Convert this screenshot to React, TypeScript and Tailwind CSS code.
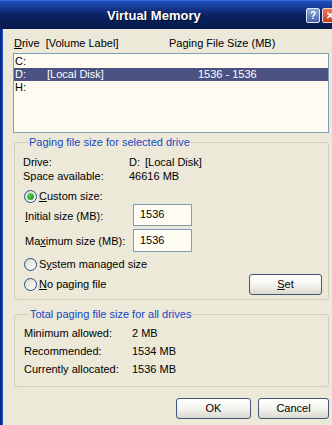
import React from "react";

const drives = [
  { letter: "C:", label: "", size: "" },
  { letter: "D:", label: "[Local Disk]", size: "1536 - 1536", selected: true },
  { letter: "H:", label: "", size: "" },
];

function Radio({ checked }: { checked?: boolean }) {
  return (
    <span className="w-[13px] h-[13px] rounded-full border border-[#1c5180] bg-gradient-to-br from-[#dcd9cd] to-[#ffffff] flex items-center justify-center shrink-0">
      {checked && (
        <span className="w-[7px] h-[7px] rounded-full bg-gradient-to-br from-[#5fd85a] to-[#1f951f]" />
      )}
    </span>
  );
}

function Field({ value, tall }: { value: string; tall?: boolean }) {
  return (
    <div
      className={`w-[59px] ${tall ? "h-[23px]" : "h-[22px]"} border border-[#7f9db9] bg-[#fffcf3] pl-[6px] flex items-center`}
    >
      {value}
    </div>
  );
}

function XpButton({ children, w }: { children: React.ReactNode; w: string }) {
  return (
    <button
      className={`${w} h-[21px] rounded-[3px] border border-[#43557a] bg-gradient-to-b from-[#ffffff] via-[#f4f4f0] to-[#dcd8cc] text-[11px] leading-[13px] flex items-center justify-center`}
    >
      {children}
    </button>
  );
}

export default function App() {
  return (
    <div className="w-[332px] h-[425px] overflow-hidden flex flex-col bg-[#ece9d8] text-[11px] leading-[13px] text-black font-['Liberation_Sans',Arial,sans-serif]">
      {/* Title bar */}
      <div className="h-[29px] shrink-0 flex items-center bg-gradient-to-b from-[#1f4fbf] via-[#0b2263] to-[#081a4c] border-t border-[#3566d6]">
        <span className="ml-[107px] text-white font-bold text-[13px] leading-[15px] [text-shadow:1px_1px_0_#030a24]">
          Virtual Memory
        </span>
        <div className="ml-auto flex items-center gap-[2px] -mr-[5px]">
          <span className="w-[14px] h-[15px] rounded-[2px] border border-[#dfe6f5] bg-gradient-to-b from-[#8fa8d8] to-[#4a64a8] text-white text-[10px] font-bold flex items-center justify-center">
            ?
          </span>
          <span className="w-[15px] h-[15px] rounded-[2px] border border-[#f3d7cc] bg-gradient-to-b from-[#e87a5c] to-[#c23b18] text-white text-[10px] font-bold flex items-center justify-center">
            ✕
          </span>
        </div>
      </div>

      <div className="flex flex-1">
        {/* Window left frame */}
        <div className="w-[4px] bg-[#0a2a86] border-r border-[#2454c4]" />

        <div className="flex-1 flex flex-col pl-[10px] pr-[3px] pt-[8px]">
          {/* List header */}
          <div className="flex pl-[1px]">
            <span className="w-[155px]">
              <span className="underline">D</span>rive
              <span className="ml-[6px]">[Volume Label]</span>
            </span>
            <span>Paging File Size (MB)</span>
          </div>

          {/* Drive list */}
          <div className="mt-[3px] h-[80px] border border-[#7f9db9] bg-[#fffbf0] pt-[1px]">
            {drives.map((d) => (
              <div
                key={d.letter}
                className={`h-[13px] flex items-center pl-[1px] ${d.selected ? "bg-[#4b5283] text-white" : ""}`}
              >
                <span className="w-[32px]">{d.letter}</span>
                <span className="w-[151px]">{d.label}</span>
                <span>{d.size}</span>
              </div>
            ))}
          </div>

          {/* Selected drive group */}
          <fieldset className="mt-[3px] ml-[1px] border border-[#d0d0bf] rounded-[3px] pl-[8px] pr-[6px] pb-[4px]">
            <legend className="ml-[5px] px-[1px] text-[#1747c2]">Paging file size for selected drive</legend>
            <div className="mt-[6px] h-[14px] flex items-center">
              <span className="w-[106px]">Drive:</span>
              <span>
                D:<span className="ml-[5px]">[Local Disk]</span>
              </span>
            </div>
            <div className="h-[14px] flex items-center">
              <span className="w-[106px]">Space available:</span>
              <span>46616 MB</span>
            </div>
            <div className="mt-[7px] h-[13px] flex items-center ml-[1px] gap-[2px]">
              <Radio checked />
              <span>
                <span className="underline">C</span>ustom size:
              </span>
            </div>
            <div className="h-[23px] flex items-center">
              <span className="w-[108px] ml-[2px] pt-[3px]">
                <span className="underline">I</span>nitial size (MB):
              </span>
              <Field value="1536" />
            </div>
            <div className="mt-[3px] h-[23px] flex items-center">
              <span className="w-[108px] ml-[2px] pt-[2px]">
                Ma<span className="underline">x</span>imum size (MB):
              </span>
              <Field value="1536" tall />
            </div>
            <div className="mt-[6px] h-[13px] flex items-center ml-[1px] gap-[2px]">
              <Radio />
              <span>
                S<span className="underline">y</span>stem managed size
              </span>
            </div>
            <div className="mt-[3px] h-[21px] flex items-center">
              <div className="flex items-center ml-[1px] gap-[2px]">
                <Radio />
                <span>
                  <span className="underline">N</span>o paging file
                </span>
              </div>
              <div className="ml-auto">
                <XpButton w="w-[73px]">
                  <span className="underline">S</span>et
                </XpButton>
              </div>
            </div>
          </fieldset>

          {/* Totals group */}
          <fieldset className="mt-[8px] ml-[1px] border border-[#d0d0bf] rounded-[3px] pl-[9px] pb-[8px]">
            <legend className="ml-[5px] px-[1px] text-[#1747c2]">Total paging file size for all drives</legend>
            <div className="mt-[3px]">
              {[
                ["Minimum allowed:", "2 MB"],
                ["Recommended:", "1534 MB"],
                ["Currently allocated:", "1536 MB"],
              ].map(([k, v]) => (
                <div key={k} className="h-[18px] flex items-center">
                  <span className="w-[108px]">{k}</span>
                  <span>{v}</span>
                </div>
              ))}
            </div>
          </fieldset>

          {/* Dialog buttons */}
          <div className="mt-[11px] flex ml-[163px] gap-[7px]">
            <XpButton w="w-[75px]">OK</XpButton>
            <XpButton w="w-[71px]">Cancel</XpButton>
          </div>
        </div>
      </div>
    </div>
  );
}
